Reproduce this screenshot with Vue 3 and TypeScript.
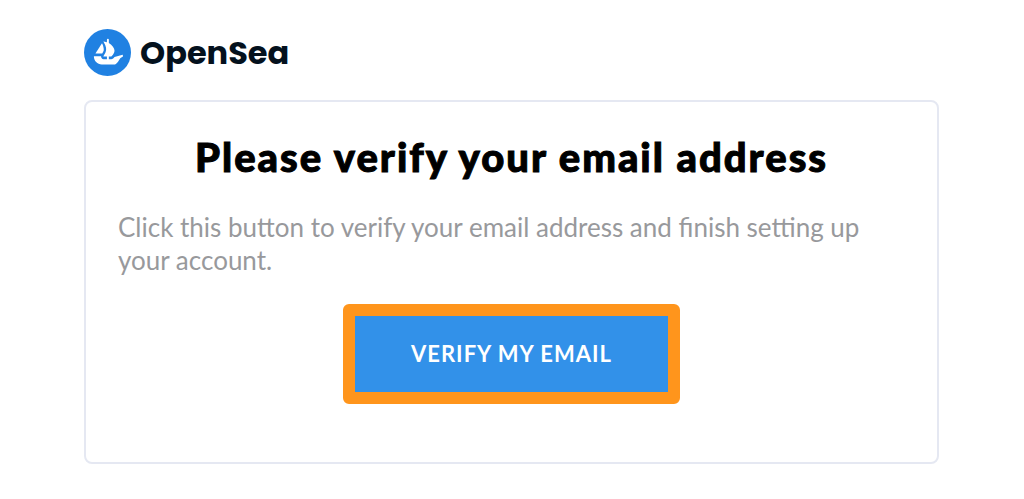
<script setup lang="ts">
const title: string = 'Please verify your email address'
const message: string = 'Click this button to verify your email address and finish setting up your account.'
</script>

<template>
  <main class="email">
    <header class="brand">
      <svg class="mark" viewBox="0 0 90 90" aria-hidden="true">
        <circle cx="45" cy="45" r="45" fill="#2081e2" />
        <g fill="#fff">
          <path d="M22.2 46.5 34.1 27.9C34.3 27.6 34.7 27.7 34.8 27.9C36.8 32.3 38.4 37.8 37.7 41.2C37.2 43.1 36 45.3 34.9 47Q34.8 47.1 34.6 47.1H22.5Q22 47 22.2 46.5Z" />
          <path d="M74.4 49.9V52.8Q74.4 53.1 74.1 53.2C73.2 53.6 70.1 55 68.8 56.8C65.5 61.4 63 67.9 57.4 67.9H33.9C25.6 67.9 18.9 61.2 18.9 52.8V52.6Q18.9 52.2 19.3 52.2H32.4Q32.8 52.2 32.8 52.7C32.7 55.5 34.5 57.7 37.4 57.7H43.9V52.7H37.5Q36.9 52.6 37.1 52C38 50.7 39.8 47.9 41.3 44.7C43.6 39.1 42.4 32.8 38.2 25.8L37.3 24.3Q37.2 23.7 37.8 23.8L43.9 25.5V20.8Q43.9 18.9 45.8 18.9Q47.6 18.9 47.6 20.8V26.7C54.1 31.2 58.4 36.3 58.4 41.2C58.4 45 56.5 48.3 53.3 51.6C52.7 52.4 51.8 52.7 51 52.7H47.6V57.7H52.4C54.4 57.7 55.4 56.6 58.1 53.9Q58.3 53.7 58.5 53.6L73.9 49.5Q74.4 49.4 74.4 49.9Z" />
        </g>
      </svg>
      <span class="name">OpenSea</span>
    </header>
    <section class="card">
      <h1>{{ title }}</h1>
      <p>{{ message }}</p>
      <button type="button">VERIFY MY EMAIL</button>
    </section>
  </main>
</template>

<style>
body {
  margin: 0;
  background: #fff;
}
</style>

<style scoped>
.email {
  box-sizing: border-box;
  padding: 29px 85px 34px 84px;
  font-family: Avenir, Lato, sans-serif;
}

.brand {
  display: flex;
  align-items: flex-start;
  gap: 9px;
  margin-bottom: 23px;
}

.mark {
  width: 47px;
  height: 47px;
}

.name {
  color: #04111d;
  font-family: Poppins, Inter, sans-serif;
  font-size: 32px;
  font-weight: 700;
  line-height: 48px;
}

.card {
  display: flex;
  flex-direction: column;
  align-items: center;
  padding: 30px 32px 58px;
  border: 2px solid #e5e8f2;
  border-radius: 8px;
}

h1 {
  margin: 0 0 29px;
  color: #000;
  font-size: 40px;
  font-weight: 900;
  line-height: 50px;
  letter-spacing: 2px;
  text-align: center;
  -webkit-text-stroke: 1px #000;
}

p {
  align-self: stretch;
  margin: 0 0 27px;
  color: #98999c;
  font-size: 26px;
  line-height: 33px;
}

button {
  padding: 22px 56px;
  border: 12px solid #ff951c;
  border-radius: 6px;
  background: #3291e9;
  color: #fff;
  font-family: inherit;
  font-size: 22px;
  font-weight: 700;
  line-height: 32px;
  letter-spacing: 1px;
  cursor: pointer;
}
</style>
